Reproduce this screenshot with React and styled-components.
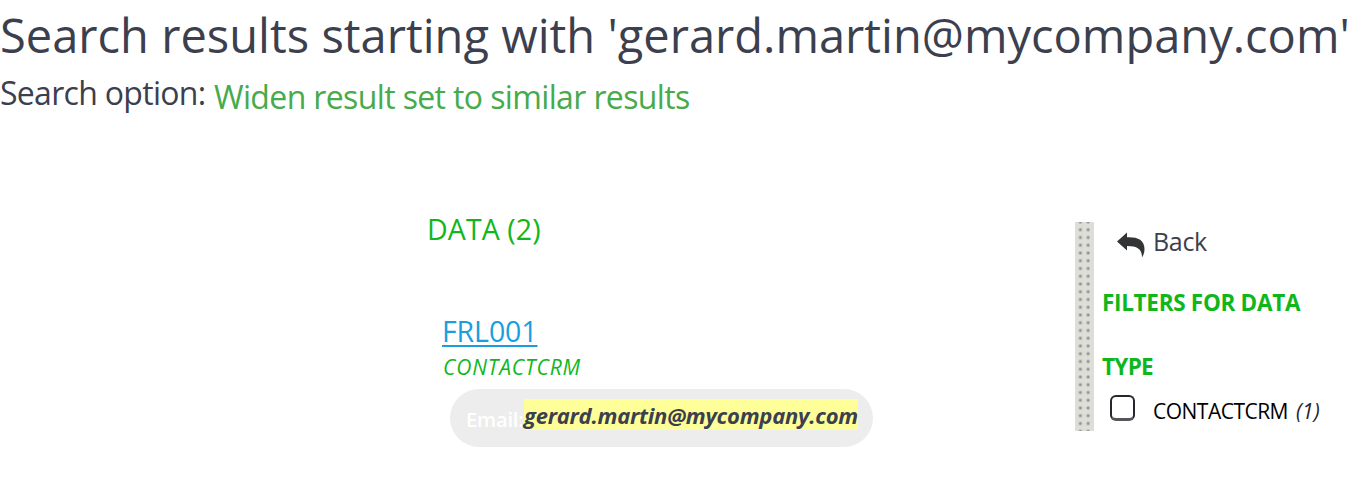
import React from 'react';
import styled, { createGlobalStyle } from 'styled-components';

const GlobalStyle = createGlobalStyle`
  * {
    box-sizing: border-box;
  }

  body {
    margin: 0;
    background: #fff;
    color: #3b3f4e;
    font-family: 'Open Sans', 'Noto Sans', sans-serif;
  }
`;

const Page = styled.div`
  display: flex;
  flex-direction: column;
  width: 1372px;
  height: 490px;
  overflow: hidden;
  white-space: nowrap;
`;

const Title = styled.h1`
  height: 68px;
  margin: 0;
  font-size: 47px;
  font-weight: 400;
  line-height: 70px;
  letter-spacing: 0.02px;
`;

const SearchOptions = styled.div`
  display: flex;
  height: 56px;
  padding-top: 3px;
  font-size: 32px;
  line-height: 44px;
  letter-spacing: -0.7px;
`;

const OptionLabel = styled.span`
  width: 214px;
`;

const OptionLink = styled.a`
  padding-top: 4px;
  color: #47aa4b;
  letter-spacing: -0.63px;
`;

const Content = styled.div`
  display: flex;
  padding: 84px 0 0 427px;
`;

const Results = styled.section`
  width: 648px;
`;

const ResultsHeading = styled.h2`
  margin: 1px 0 62px;
  color: #10b71c;
  font-size: 28.5px;
  font-weight: 400;
  line-height: 40px;
  letter-spacing: 0.1px;
`;

const Result = styled.article`
  display: flex;
  flex-direction: column;
  align-items: flex-start;
  padding-left: 15px;
`;

const ResultLink = styled.a`
  color: #1a9ee0;
  font-size: 28.5px;
  line-height: 40px;
  letter-spacing: -0.1px;
  text-decoration: underline;
  text-decoration-thickness: 2px;
  text-underline-offset: 3px;
  text-decoration-skip-ink: none;
`;

const ResultType = styled.em`
  margin: 1px 0 0 1px;
  color: #10b71c;
  font-size: 21px;
  line-height: 30px;
  letter-spacing: 0.87px;
`;

const Match = styled.div`
  display: flex;
  width: 423px;
  height: 58px;
  margin: 7px 0 0 8px;
  padding: 10px 0 0 16px;
  border-radius: 29px;
  background: #ededed;
`;

const MatchField = styled.span`
  width: 58px;
  padding-top: 6px;
  color: #fff;
  font-size: 20px;
  font-weight: 600;
  line-height: 30px;
  letter-spacing: -0.15px;
`;

const Highlight = styled.mark`
  height: 31px;
  background: #ffff99;
  color: #3b3f4e;
  font-size: 22px;
  font-style: italic;
  font-weight: 700;
  line-height: 33px;
  letter-spacing: -0.233px;
`;

const Splitter = styled.div`
  width: 19px;
  height: 209px;
  margin-top: 14px;
  border: solid #deded9;
  border-width: 0 2px 0 1px;
  background: radial-gradient(circle at 50% 50%, #8f8f8d 0.6px, #deded9 2.3px) 0.5px -3.9px / 7.75px 7.75px;
`;

const Sidebar = styled.aside`
  display: flex;
  flex-direction: column;
  padding: 17px 0 0 8px;
`;

const BackButton = styled.a`
  display: flex;
  gap: 8px;
  height: 34px;
  padding-left: 15px;
  font-size: 25px;
  line-height: 32px;
  letter-spacing: -0.3px;
`;

const FilterHeading = styled.h3`
  margin: ${props => props.$top}px 0 0;
  color: #10b71c;
  font-size: 22.5px;
  font-weight: 700;
  line-height: 32px;
  letter-spacing: ${props => props.$spacing}px;
`;

const FilterRow = styled.label`
  display: flex;
  align-items: center;
  height: 34px;
  margin-top: 11px;
  padding-left: 8px;
  color: #000;
  font-size: 21px;
`;

const Checkbox = styled.span`
  width: 25px;
  height: 26px;
  margin: -6px 18px 0 0;
  border: 2px solid #26262c;
  border-bottom: 3px solid #55555a;
  border-radius: 6px;
`;

const FilterName = styled.span`
  width: 143px;
  letter-spacing: -0.51px;
`;

const FilterCount = styled.em`
  color: #26262c;
  letter-spacing: 0.1px;
`;

const Arrow = styled.svg`
  margin-top: 7px;
`;

const BackIcon = () => (
  <Arrow width="28" height="26" viewBox="0 0 28 26">
    <path d="M0 9.500 10 .5v4.700C20 4.700 27.500 7.500 27.500 17c0 3.500-1 6-2.500 8.500 0-8-4-11.500-15-11.500V18.500Z" fill="#333436" />
  </Arrow>
);

const App = () => {
  return (
    <>
      <GlobalStyle />
      <Page>
        <Title>Search results starting with 'gerard.martin@mycompany.com'</Title>
        <SearchOptions>
          <OptionLabel>Search option:</OptionLabel>
          <OptionLink>Widen result set to similar results</OptionLink>
        </SearchOptions>
        <Content>
          <Results>
            <ResultsHeading>DATA (2)</ResultsHeading>
            <Result>
              <ResultLink>FRL001</ResultLink>
              <ResultType>CONTACTCRM</ResultType>
              <Match>
                <MatchField>Email:</MatchField>
                <Highlight>gerard.martin@mycompany.com</Highlight>
              </Match>
            </Result>
          </Results>
          <Splitter />
          <Sidebar>
            <BackButton>
              <BackIcon />
              Back
            </BackButton>
            <FilterHeading $top={28} $spacing={-0.3}>
              FILTERS FOR DATA
            </FilterHeading>
            <FilterHeading $top={32} $spacing={-0.7}>
              TYPE
            </FilterHeading>
            <FilterRow>
              <Checkbox />
              <FilterName>CONTACTCRM</FilterName>
              <FilterCount>(1)</FilterCount>
            </FilterRow>
          </Sidebar>
        </Content>
      </Page>
    </>
  );
};

export default App;
